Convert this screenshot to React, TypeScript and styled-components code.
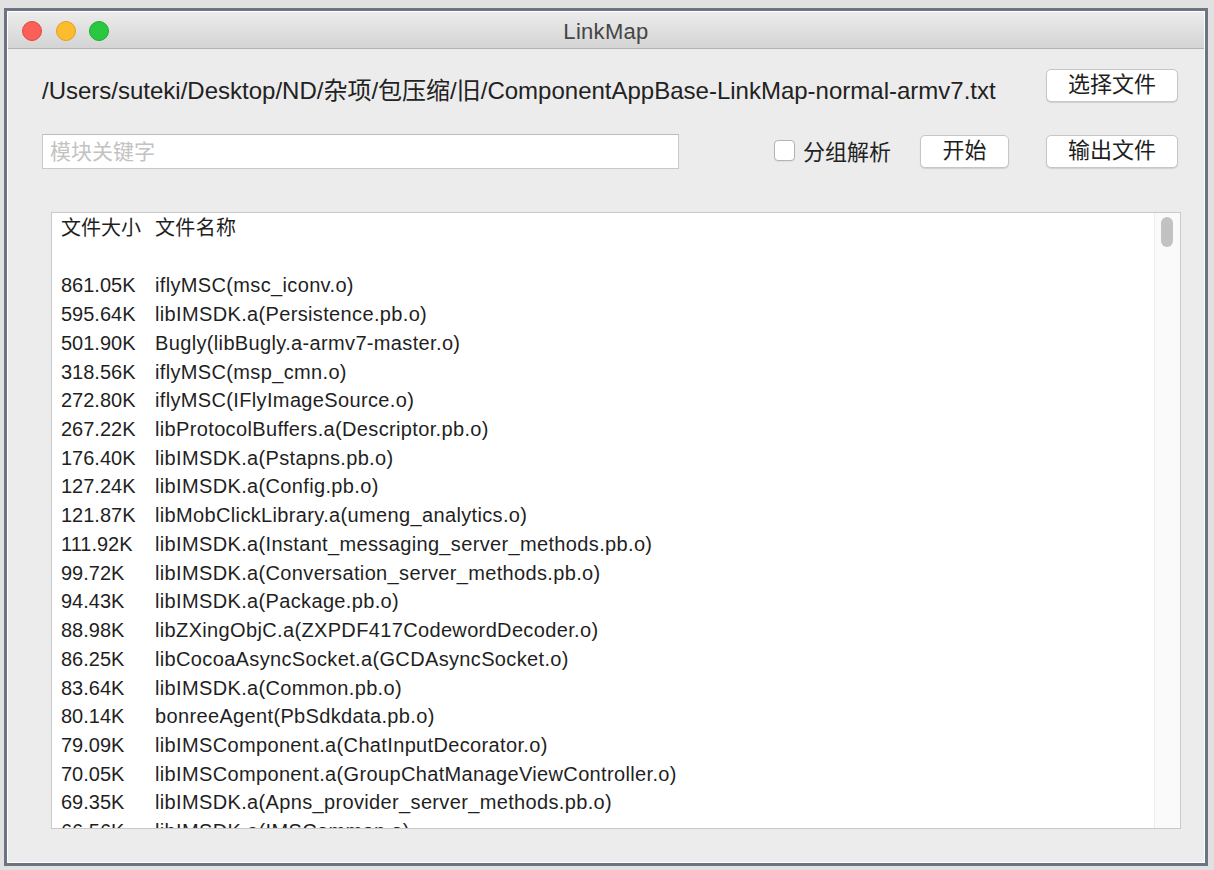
import React from "react";
import styled, { createGlobalStyle } from "styled-components";

const GlobalStyle = createGlobalStyle`
  html, body {
    margin: 0;
    padding: 0;
    background: #e1e1e1;
  }
  * {
    box-sizing: border-box;
  }
`;

const FONT = `"Liberation Sans", Arial, "Noto Sans CJK SC", sans-serif`;

const Page = styled.div`
  width: 1214px;
  height: 870px;
  padding: 8px 6px 4px 4px;
  font-family: ${FONT};
`;

const Frame = styled.div`
  width: 1204px;
  height: 858px;
  border: 3px solid #6b7480;
  background: #ffffff;
  padding: 1px;
`;

const Window = styled.div`
  width: 100%;
  height: 100%;
  background: #ececec;
  display: flex;
  flex-direction: column;
`;

const TitleBar = styled.div`
  height: 37px;
  flex: none;
  position: relative;
  display: flex;
  align-items: center;
  justify-content: center;
  padding-top: 3px;
  background: linear-gradient(#ececec, #d4d4d4);
  border-bottom: 1px solid #b3b3b3;
`;

const Title = styled.div`
  font-size: 22px;
  color: #454545;
  letter-spacing: 0.3px;
`;

const Lights = styled.div`
  position: absolute;
  left: 14px;
  top: 9px;
  display: flex;
  gap: 13.5px;
`;

const Light = styled.span<{ $fill: string; $edge: string }>`
  width: 20px;
  height: 20px;
  border-radius: 50%;
  background: ${(p) => p.$fill};
  border: 1px solid ${(p) => p.$edge};
`;

const Body = styled.div`
  flex: 1;
  min-height: 0;
  display: flex;
  flex-direction: column;
  padding: 20px 26px 33px 34px;
`;

const PathRow = styled.div`
  display: flex;
  justify-content: space-between;
  align-items: flex-start;
  height: 33px;
  flex: none;
`;

const PathText = styled.div`
  font-size: 24px;
  line-height: 33px;
  margin-top: 5px;
  color: #222;
  white-space: nowrap;
`;

const Button = styled.button<{ $w: number }>`
  width: ${(p) => p.$w}px;
  height: 33px;
  background: #ffffff;
  border: 1px solid #c6c6c6;
  border-radius: 5px;
  box-shadow: 0 1px 1px rgba(0, 0, 0, 0.12);
  font-family: ${FONT};
  font-size: 22px;
  line-height: 1;
  color: #1e1e1e;
  padding: 0 0 2px;
  flex: none;
`;

const ControlRow = styled.div`
  display: flex;
  align-items: center;
  margin-top: 32px;
  height: 35px;
  flex: none;
`;

const SearchInput = styled.input`
  width: 637px;
  height: 35px;
  flex: none;
  border: 1px solid #c9c9c9;
  border-top-color: #bdbdbd;
  background: #ffffff;
  font-family: ${FONT};
  font-size: 21px;
  padding: 0 7px;
  color: #222;
  outline: none;
  &::placeholder {
    color: #c2c2c2;
  }
`;

const CheckLabel = styled.label`
  display: flex;
  align-items: center;
  gap: 8px;
  margin-left: auto;
  margin-right: 29px;
  margin-top: -3px;
  font-size: 22px;
  color: #222;
`;

const CheckBox = styled.span`
  width: 21px;
  height: 21px;
  border: 1px solid #b3b3b3;
  border-radius: 4px;
  background: #ffffff;
  box-shadow: 0 1px 1px rgba(0, 0, 0, 0.06);
`;

const Spacer = styled.div<{ $w: number }>`
  width: ${(p) => p.$w}px;
  flex: none;
`;

const ListBox = styled.div`
  margin-top: 43px;
  margin-left: 9px;
  margin-right: -3px;
  flex: 1;
  min-height: 0;
  display: flex;
  border: 1px solid #c9c9c9;
  background: #ffffff;
  overflow: hidden;
`;

const ListContent = styled.div`
  flex: 1;
  padding: 1px 0 0 9px;
  overflow: hidden;
`;

const Row = styled.div`
  display: grid;
  grid-template-columns: 94px 1fr;
  height: 28.72px;
  line-height: 28.72px;
  font-size: 20px;
  color: #1f1f1f;
  white-space: nowrap;
`;

const Name = styled.span`
  letter-spacing: 0.35px;
`;

const ScrollTrack = styled.div`
  width: 26px;
  flex: none;
  background: #fafafa;
  border-left: 1px solid #ececec;
  padding: 4px 0 0 6px;
`;

const Thumb = styled.div`
  width: 12px;
  height: 30px;
  border-radius: 6px;
  background: #c2c2c2;
`;

const rows: [string, string][] = [
  ["文件大小", "文件名称"],
  ["", ""],
  ["861.05K", "iflyMSC(msc_iconv.o)"],
  ["595.64K", "libIMSDK.a(Persistence.pb.o)"],
  ["501.90K", "Bugly(libBugly.a-armv7-master.o)"],
  ["318.56K", "iflyMSC(msp_cmn.o)"],
  ["272.80K", "iflyMSC(IFlyImageSource.o)"],
  ["267.22K", "libProtocolBuffers.a(Descriptor.pb.o)"],
  ["176.40K", "libIMSDK.a(Pstapns.pb.o)"],
  ["127.24K", "libIMSDK.a(Config.pb.o)"],
  ["121.87K", "libMobClickLibrary.a(umeng_analytics.o)"],
  ["111.92K", "libIMSDK.a(Instant_messaging_server_methods.pb.o)"],
  ["99.72K", "libIMSDK.a(Conversation_server_methods.pb.o)"],
  ["94.43K", "libIMSDK.a(Package.pb.o)"],
  ["88.98K", "libZXingObjC.a(ZXPDF417CodewordDecoder.o)"],
  ["86.25K", "libCocoaAsyncSocket.a(GCDAsyncSocket.o)"],
  ["83.64K", "libIMSDK.a(Common.pb.o)"],
  ["80.14K", "bonreeAgent(PbSdkdata.pb.o)"],
  ["79.09K", "libIMSComponent.a(ChatInputDecorator.o)"],
  ["70.05K", "libIMSComponent.a(GroupChatManageViewController.o)"],
  ["69.35K", "libIMSDK.a(Apns_provider_server_methods.pb.o)"],
  ["66.56K", "libIMSDK.a(IMSCommon.o)"],
];

export default function App() {
  return (
    <Page>
      <GlobalStyle />
      <Frame>
        <Window>
          <TitleBar>
            <Lights>
              <Light $fill="#fc5f57" $edge="#e2463f" />
              <Light $fill="#fdbc2e" $edge="#df9f22" />
              <Light $fill="#2ac840" $edge="#1daa2c" />
            </Lights>
            <Title>LinkMap</Title>
          </TitleBar>
          <Body>
            <PathRow>
              <PathText>
                /Users/suteki/Desktop/ND/杂项/包压缩/旧/ComponentAppBase-LinkMap-normal-armv7.txt
              </PathText>
              <Button $w={132}>选择文件</Button>
            </PathRow>
            <ControlRow>
              <SearchInput placeholder="模块关键字" />
              <CheckLabel>
                <CheckBox />
                分组解析
              </CheckLabel>
              <Button $w={89}>开始</Button>
              <Spacer $w={37} />
              <Button $w={132}>输出文件</Button>
            </ControlRow>
            <ListBox>
              <ListContent>
                {rows.map(([size, name], i) => (
                  <Row key={i}>
                    <span>{size}</span>
                    <Name>{name}</Name>
                  </Row>
                ))}
              </ListContent>
              <ScrollTrack>
                <Thumb />
              </ScrollTrack>
            </ListBox>
          </Body>
        </Window>
      </Frame>
    </Page>
  );
}
